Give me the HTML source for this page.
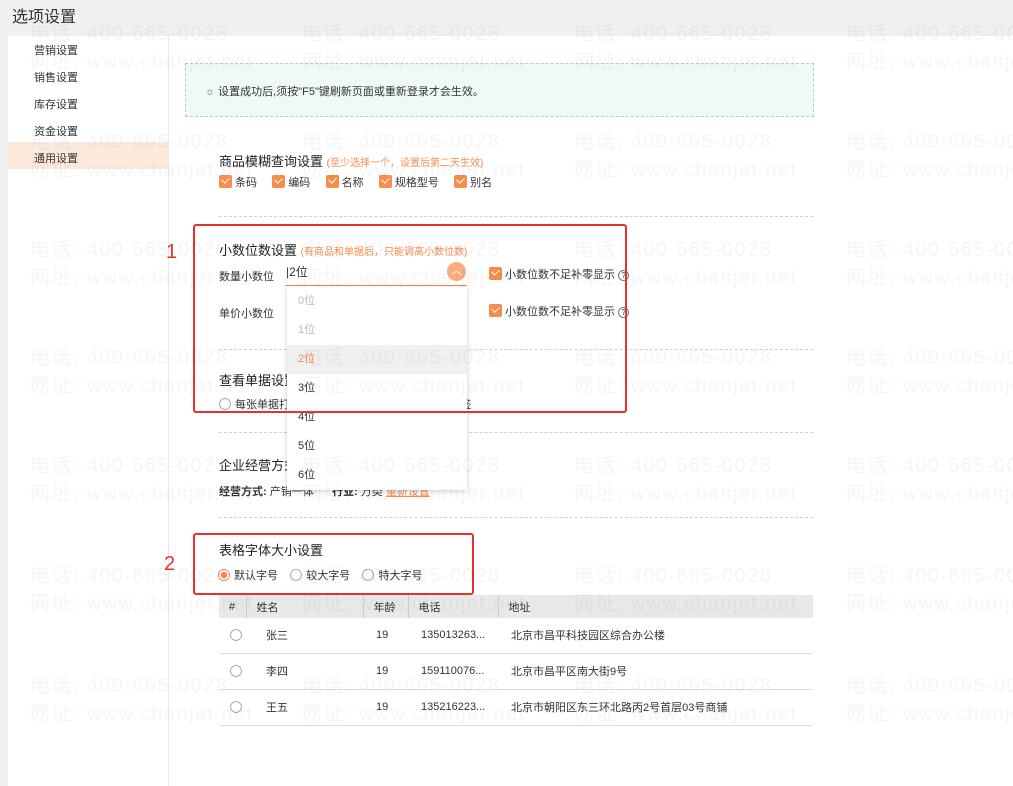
<!DOCTYPE html>
<html><head><meta charset="utf-8"><style>
*{margin:0;padding:0;box-sizing:border-box}
body{width:1013px;height:786px;overflow:hidden;background:#f0f0f0;font-family:"Liberation Sans","Noto Sans CJK SC",sans-serif;font-size:12px;color:#333;position:relative}
.a{position:absolute}
.title{left:12px;top:3px;font-size:16px;color:#333}
.panel{left:8px;top:36px;width:1005px;height:750px;background:#fff}
.side{left:8px;top:36px;width:161px;height:750px;border-right:1px solid #e8e8e8}
.nav{left:34px;font-size:11px;color:#333}
.cb{display:inline-block;width:13px;height:13px;background:#f58d4b;border-radius:2px;position:relative;vertical-align:-2px;margin-right:3px}
.cb:after{content:"";position:absolute;left:3px;top:2px;width:6px;height:4px;border-left:1.6px solid #fff;border-bottom:1.6px solid #fff;transform:rotate(-45deg)}
.h{font-size:13px;color:#222}
.o{color:#f58d4b;font-size:10px}
.dash{left:219px;width:594px;border-top:1px dashed #d0d0d0;height:0}
.rad{display:inline-block;width:12px;height:12px;border:1px solid #aaa;border-radius:50%;vertical-align:-2px;margin-right:4px}
.red{border:2px solid #e5322d;border-radius:3px}
.wm{color:rgba(0,0,0,0.04);font-size:20px;white-space:nowrap;letter-spacing:1.4px;z-index:50;pointer-events:none}
.dd{left:287px;top:287px;width:180px;height:203px;background:#fff;box-shadow:0 1px 5px rgba(0,0,0,.2);z-index:20}
.dd div{height:29px;line-height:29px;padding-left:11px;font-size:11px;color:#333}
td,th{font-size:11px;text-align:left;font-weight:normal}
</style></head><body>
<div class="a title">选项设置</div>
<div class="a panel"></div>
<div class="a side"></div>
<div class="a" style="left:8px;top:142px;width:160px;height:27px;background:#fde8dc"></div>
<div class="a nav" style="top:42px">营销设置</div>
<div class="a nav" style="top:69px">销售设置</div>
<div class="a nav" style="top:96px">库存设置</div>
<div class="a nav" style="top:123px">资金设置</div>
<div class="a nav" style="top:150px">通用设置</div>

<div class="a" style="left:185px;top:63px;width:629px;height:54px;background:#f0faf5;border:1px dashed #a8d8bf"></div>
<div class="a" style="left:205px;top:83px;font-size:11px;color:#333"><span style="color:#666">☼</span> 设置成功后,须按"F5"键刷新页面或重新登录才会生效。</div>

<div class="a h" style="left:219px;top:151px">商品模糊查询设置 <span class="o">(至少选择一个，设置后第二天生效)</span></div>
<div class="a" style="left:219px;top:174px;font-size:11px"><span class="cb"></span>条码 &nbsp;&nbsp;&nbsp;&nbsp;<span class="cb"></span>编码 &nbsp;&nbsp;&nbsp;&nbsp;<span class="cb"></span>名称 &nbsp;&nbsp;&nbsp;&nbsp;<span class="cb"></span>规格型号 &nbsp;&nbsp;&nbsp;&nbsp;<span class="cb"></span>别名</div>
<div class="a dash" style="top:216px"></div>

<div class="a h" style="left:219px;top:240px">小数位数设置 <span class="o">(有商品和单据后，只能调高小数位数)</span></div>
<div class="a" style="left:219px;top:268px;font-size:11px">数量小数位</div>
<div class="a" style="left:285px;top:262px;width:182px;height:24px;border-bottom:1px solid #f58d4b;font-size:12px;padding-left:1px;line-height:20px">|2位</div>
<div class="a" style="left:447px;top:262px;width:19px;height:19px;border-radius:50%;background:#f9ae80;color:#fff;text-align:center;font-size:11px;line-height:19px">︿</div>
<div class="a" style="left:489px;top:266px;font-size:11px"><span class="cb"></span>小数位数不足补零显示 <span style="display:inline-block;width:11px;height:11px;border:1px solid #777;border-radius:50%;font-size:8px;line-height:9px;text-align:center">?</span></div>
<div class="a" style="left:219px;top:305px;font-size:11px">单价小数位</div>
<div class="a" style="left:489px;top:303px;font-size:11px"><span class="cb"></span>小数位数不足补零显示 <span style="display:inline-block;width:11px;height:11px;border:1px solid #777;border-radius:50%;font-size:8px;line-height:9px;text-align:center">?</span></div>
<div class="a dash" style="top:349px"></div>
<div class="a h" style="left:219px;top:370px">查看单据设置</div>
<div class="a" style="left:219px;top:396px;font-size:11px"><span class="rad"></span>每张单据打开时打开新页签 &nbsp;&nbsp;&nbsp;&nbsp;&nbsp;&nbsp;&nbsp;&nbsp;&nbsp;&nbsp;&nbsp;&nbsp;&nbsp;&nbsp;&nbsp;&nbsp;&nbsp;&nbsp;&nbsp;&nbsp;&nbsp;&nbsp;&nbsp;&nbsp;&nbsp;&nbsp;页签</div>
<div class="a dash" style="top:432px"></div>
<div class="a h" style="left:219px;top:455px">企业经营方式</div>
<div class="a" style="left:219px;top:483px;font-size:11px"><b>经营方式:</b> 产销一体 &nbsp;&nbsp;&nbsp;&nbsp;&nbsp;<b>行业:</b> 万类 <span style="color:#f58d4b;text-decoration:underline">重新设置</span></div>
<div class="a dash" style="top:517px"></div>

<div class="a dd"><div style="color:#bbb;margin-top:0">0位</div><div style="color:#bbb">1位</div><div style="color:#f58d4b;background:#f0f0f0">2位</div><div>3位</div><div>4位</div><div>5位</div><div>6位</div></div>

<div class="a h" style="left:219px;top:540px">表格字体大小设置</div>
<div class="a" style="left:218px;top:567px;font-size:11px"><span class="rad" style="border-color:#f58d4b;background:radial-gradient(circle,#f58d4b 0 3px,#fff 3.5px)"></span>默认字号 &nbsp;&nbsp;&nbsp;<span class="rad"></span>较大字号 &nbsp;&nbsp;&nbsp;<span class="rad"></span>特大字号</div>

<table class="a" style="left:219px;top:595px;width:594px;border-collapse:collapse">
<tr style="background:#e8e8e8;height:23px"><th style="width:26px;padding-left:10px;border-right:1px solid #ccc">#</th><th style="width:117px;padding-left:10px;border-right:1px solid #ccc">姓名</th><th style="width:45px;padding-left:10px;border-right:1px solid #ccc">年龄</th><th style="width:90px;padding-left:10px;border-right:1px solid #ccc">电话</th><th style="padding-left:10px">地址</th></tr>
<tr style="height:35px;border-bottom:1px solid #ddd"><td style="padding-left:11px"><span class="rad"></span></td><td style="padding-left:20px">张三</td><td style="padding-left:13px">19</td><td style="padding-left:13px">135013263...</td><td style="padding-left:13px">北京市昌平科技园区综合办公楼</td></tr>
<tr style="height:36px;border-bottom:1px solid #ddd"><td style="padding-left:11px"><span class="rad"></span></td><td style="padding-left:20px">李四</td><td style="padding-left:13px">19</td><td style="padding-left:13px">159110076...</td><td style="padding-left:13px">北京市昌平区南大街9号</td></tr>
<tr style="height:36px;border-bottom:1px solid #ddd"><td style="padding-left:11px"><span class="rad"></span></td><td style="padding-left:20px">王五</td><td style="padding-left:13px">19</td><td style="padding-left:13px">135216223...</td><td style="padding-left:13px">北京市朝阳区东三环北路丙2号首层03号商铺</td></tr>
</table>

<div class="a red" style="left:193px;top:224px;width:434px;height:189px;z-index:30"></div>
<div class="a" style="left:166px;top:241px;color:#e5322d;font-size:20px">1</div>
<div class="a red" style="left:193px;top:533px;width:281px;height:62px"></div>
<div class="a" style="left:164px;top:553px;color:#e5322d;font-size:20px">2</div>

<div class="a" style="left:0;top:0;width:1013px;height:786px;z-index:50;pointer-events:none">
<script>
var h='';var ys=[17,125,233,341,449,559,669];var xs=[30,302,574,846];
for(var i=0;i<ys.length;i++)for(var j=0;j<xs.length;j++){h+='<div class="a wm" style="left:'+xs[j]+'px;top:'+ys[i]+'px">电话: 400-665-0028</div><div class="a wm" style="left:'+xs[j]+'px;top:'+(ys[i]+28)+'px">网址: www.chanjet.net</div>';}
document.write(h);
</script>
</div>
</body></html>
